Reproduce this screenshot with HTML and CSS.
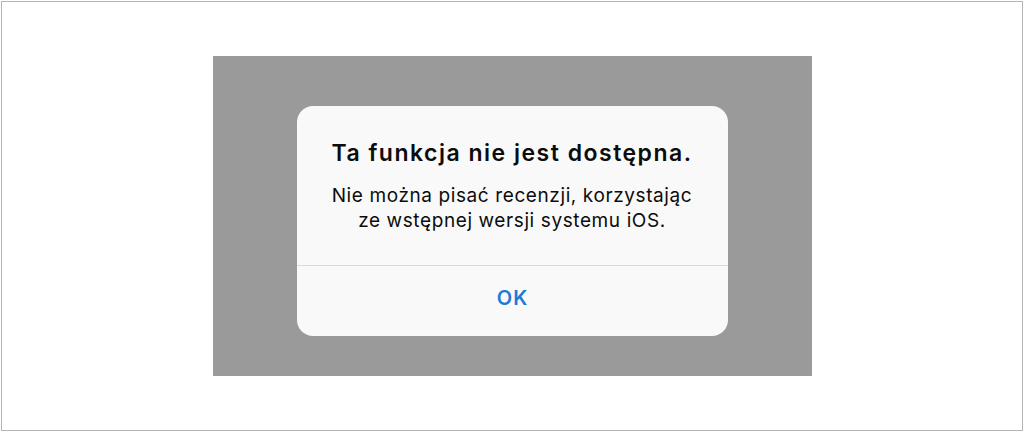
FILE: index.html
```html
<!DOCTYPE html>
<html lang="pl">
<head>
<meta charset="utf-8">
<link rel="stylesheet" href="styles.css">
</head>
<body>
<div class="frame">
  <div class="screen">
    <div class="alert">
      <div class="alert-content">
        <div class="alert-title">Ta funkcja nie jest dostępna.</div>
        <div class="alert-message">Nie można pisać recenzji, korzystając<br>ze wstępnej wersji systemu iOS.</div>
      </div>
      <div class="alert-button">OK</div>
    </div>
  </div>
</div>
</body>
</html>
```

FILE: styles.css
```css
html, body {
  margin: 0;
  padding: 0;
  background: #ffffff;
}
body {
  padding: 1px;
  font-family: Inter, "Noto Sans", "DejaVu Sans", sans-serif;
}
.frame {
  width: 1020px;
  height: 428px;
  border: 1px solid #b4b4b4;
  display: flex;
  align-items: center;
  justify-content: center;
  background: #ffffff;
}
.screen {
  width: 599px;
  height: 320px;
  background: #9a9a9a;
  display: flex;
  justify-content: center;
  padding-top: 50px;
  box-sizing: border-box;
}
.alert {
  width: 431px;
  height: 230px;
  background: #f9f9f9;
  border-radius: 16px;
  display: flex;
  flex-direction: column;
  overflow: hidden;
}
.alert-content {
  height: 160px;
  box-sizing: border-box;
  padding: 33px 10px 0;
  border-bottom: 1px solid #d9d9dc;
  text-align: center;
  color: #0c0c0c;
}
.alert-title {
  font-size: 23px;
  line-height: 28px;
  font-weight: 600;
  letter-spacing: 1.5px;
}
.alert-message {
  margin-top: 16px;
  font-size: 19px;
  line-height: 25px;
  font-weight: 400;
  letter-spacing: 0.6px;
}
.alert-button {
  flex: 1;
  text-align: center;
  font-size: 20px;
  line-height: 64px;
  font-weight: 600;
  letter-spacing: 1px;
  text-indent: 1px;
  color: #1d7ad6;
}
```
